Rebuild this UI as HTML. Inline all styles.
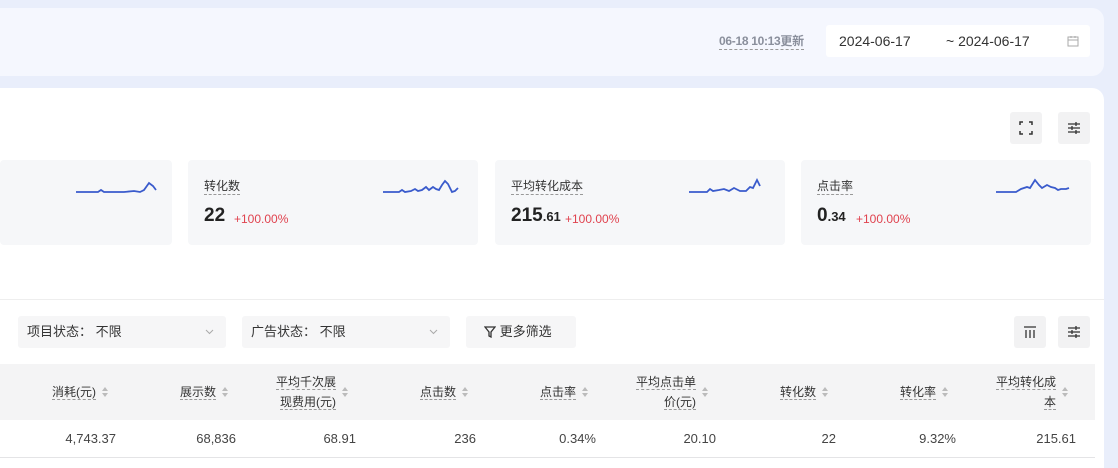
<!DOCTYPE html>
<html><head><meta charset="utf-8"><style>
*{margin:0;padding:0;box-sizing:border-box}
body{width:1118px;height:462px;overflow:hidden;background:#e9eefb;font-family:"Liberation Sans","Noto Sans CJK SC",sans-serif;position:relative;color:#333}
.a{position:absolute}
.top{left:0;top:8px;width:1104px;height:68px;background:#f5f7fe;border-radius:0 12px 12px 0}
.main{left:0;top:88px;width:1104px;height:380px;background:#fff;border-radius:0 12px 0 0}
.card{top:160px;height:85px;background:#f6f7f9;border-radius:4px}
.ct{font-size:12px;color:#333;border-bottom:1px dashed #999;line-height:16px;top:178px}
.cv{top:205px;font-size:19px;font-weight:bold;color:#222}
.cv small{font-size:13px}
.cp{top:212px;font-size:12px;color:#e0434f}
.ib{width:32px;height:32px;background:#f2f2f3;border-radius:3px}
.sel{top:316px;height:32px;background:#f6f6f7;border-radius:3px;font-size:13px;color:#333;line-height:32px;padding-left:9px}
.th{top:364px;left:0;width:1095px;height:56px;background:#f4f4f5}
.tr{top:420px;left:0;width:1095px;height:38px;border-bottom:1px solid #e4e4e6}
.h{font-size:12px;color:#333;text-align:right;line-height:20px}
.h span{border-bottom:1px dashed #999}
.v{top:431px;font-size:13px;color:#444;text-align:right;width:110px}
.so{width:6px;height:12px}
</style></head><body>
<div class="a top"></div>
<div class="a main"></div>
<div class="a" style="left:719px;top:34px;font-size:12px;font-weight:bold;color:#8a8f9c;border-bottom:1px dashed #999;line-height:15px;letter-spacing:-0.3px">06-18 10:13更新</div>
<div class="a" style="left:826px;top:25px;width:264px;height:32px;background:#fff;border-radius:3px;font-size:14px;color:#333;line-height:32px">
<span class="a" style="left:13px">2024-06-17</span><span class="a" style="left:120px">~ 2024-06-17</span>
<svg class="a" style="left:241px;top:10px" width="12" height="12" viewBox="0 0 12 12" fill="none" stroke="#aaa" stroke-width="1"><rect x="1" y="2" width="10" height="9"/><path d="M1 5h10M4 1v2M8 1v2"/></svg></div>
<div class="a ib" style="left:1010px;top:112px"><svg class="a" style="left:9px;top:9px" width="14" height="14" viewBox="0 0 14 14" fill="none" stroke="#333" stroke-width="1.5"><path d="M1 4V1h3M10 1h3v3M13 10v3h-3M4 13H1v-3"/></svg></div>
<div class="a ib" style="left:1058px;top:112px"><svg class="a" style="left:9px;top:9px" width="14" height="14" viewBox="0 0 14 14" fill="none" stroke="#333" stroke-width="1.3"><path d="M1 3h12M1 7h12M1 11h12M9 1v4M5 5v4M9 9v4"/></svg></div>

<div class="a card" style="left:0;width:172px"></div>
<div class="a card" style="left:188px;width:290px"></div>
<div class="a card" style="left:495px;width:290px"></div>
<div class="a card" style="left:801px;width:290px"></div>
<svg class="a" style="left:0;top:170px" width="1118" height="40" fill="none" stroke="#3a5bcc" stroke-width="1.8">
<path d="M76 22h22l3-2 3 2h20l10-1 6 1 4-2 5-7 4 3 3 4"/>
<path d="M383 22h16l3-2 3 2 6-1 4-2 3 2 4-1 4-3 3 3 4-3 3 2 3 1 3-5 3-4 3 3 4 8 3-1 3-3"/>
<path d="M689 22h18l3-3 3 2 6-1 5-1 5 2 5-3 6 3 6 0 4-4 3 1 4-8 3 6"/>
<path d="M996 22h20l5-3 6-2 3 1 5-8 4 5 3 3 5-3 4 2 4 1 3 2 3-1 5 0 3-1"/>
</svg>
<div class="a ct" style="left:204px">转化数</div>
<div class="a cv" style="left:204px">22</div><div class="a cp" style="left:234px">+100.00%</div>
<div class="a ct" style="left:511px">平均转化成本</div>
<div class="a cv" style="left:511px">215<small>.61</small></div><div class="a cp" style="left:565px">+100.00%</div>
<div class="a ct" style="left:817px">点击率</div>
<div class="a cv" style="left:817px">0<small>.34</small></div><div class="a cp" style="left:856px">+100.00%</div>

<div class="a" style="left:0;top:299px;width:1104px;border-top:1px solid #eee"></div>
<div class="a sel" style="left:18px;width:208px">项目状态：&nbsp;不限<svg class="a" style="left:187px;top:13px" width="9" height="6" viewBox="0 0 9 6" fill="none" stroke="#aaa"><path d="M1 1l3.5 3.5L8 1"/></svg></div>
<div class="a sel" style="left:242px;width:208px">广告状态：&nbsp;不限<svg class="a" style="left:187px;top:13px" width="9" height="6" viewBox="0 0 9 6" fill="none" stroke="#aaa"><path d="M1 1l3.5 3.5L8 1"/></svg></div>
<div class="a sel" style="left:466px;width:110px;padding-left:18px"><svg style="vertical-align:-2px" width="12" height="12" viewBox="0 0 12 12" fill="none" stroke="#333" stroke-width="1.3"><path d="M1 1h10L7 6v5L5 10V6z"/></svg> 更多筛选</div>
<div class="a ib" style="left:1014px;top:316px"><svg class="a" style="left:9px;top:9px" width="14" height="14" viewBox="0 0 14 14" fill="none" stroke="#333" stroke-width="1.3"><path d="M1 2h12M3 5v8M7 5v8M11 5v8"/></svg></div>
<div class="a ib" style="left:1058px;top:316px"><svg class="a" style="left:9px;top:9px" width="14" height="14" viewBox="0 0 14 14" fill="none" stroke="#333" stroke-width="1.3"><path d="M1 3h12M1 7h12M1 11h12M9 1v4M5 5v4M9 9v4"/></svg></div>

<div class="a th"></div><div class="a tr"></div>
<div id="cols"></div>
<script>
var hs=[["消耗(元)"],["展示数"],["平均千次展","现费用(元)"],["点击数"],["点击率"],["平均点击单","价(元)"],["转化数"],["转化率"],["平均转化成","本"]];
var vs=["4,743.37","68,836","68.91","236","0.34%","20.10","22","9.32%","215.61"];
var o="";
for(var i=0;i<9;i++){var r=128+120*i;
var two=hs[i].length>1;
o+='<div class="a h" style="left:'+(r-150)+'px;width:118px;top:'+(two?372:382)+'px">'+hs[i].map(function(t){return '<span>'+t+'</span>'}).join('<br>')+'</div>';
o+='<svg class="a so" style="left:'+(r-26)+'px;top:386px" viewBox="0 0 6 12"><path d="M3 1L6 5H0z" fill="#bbb"/><path d="M3 11L6 7H0z" fill="#bbb"/></svg>';
o+='<div class="a v" style="left:'+(r-122)+'px">'+vs[i]+'</div>';}
document.getElementById("cols").innerHTML=o;
</script>
</body></html>
